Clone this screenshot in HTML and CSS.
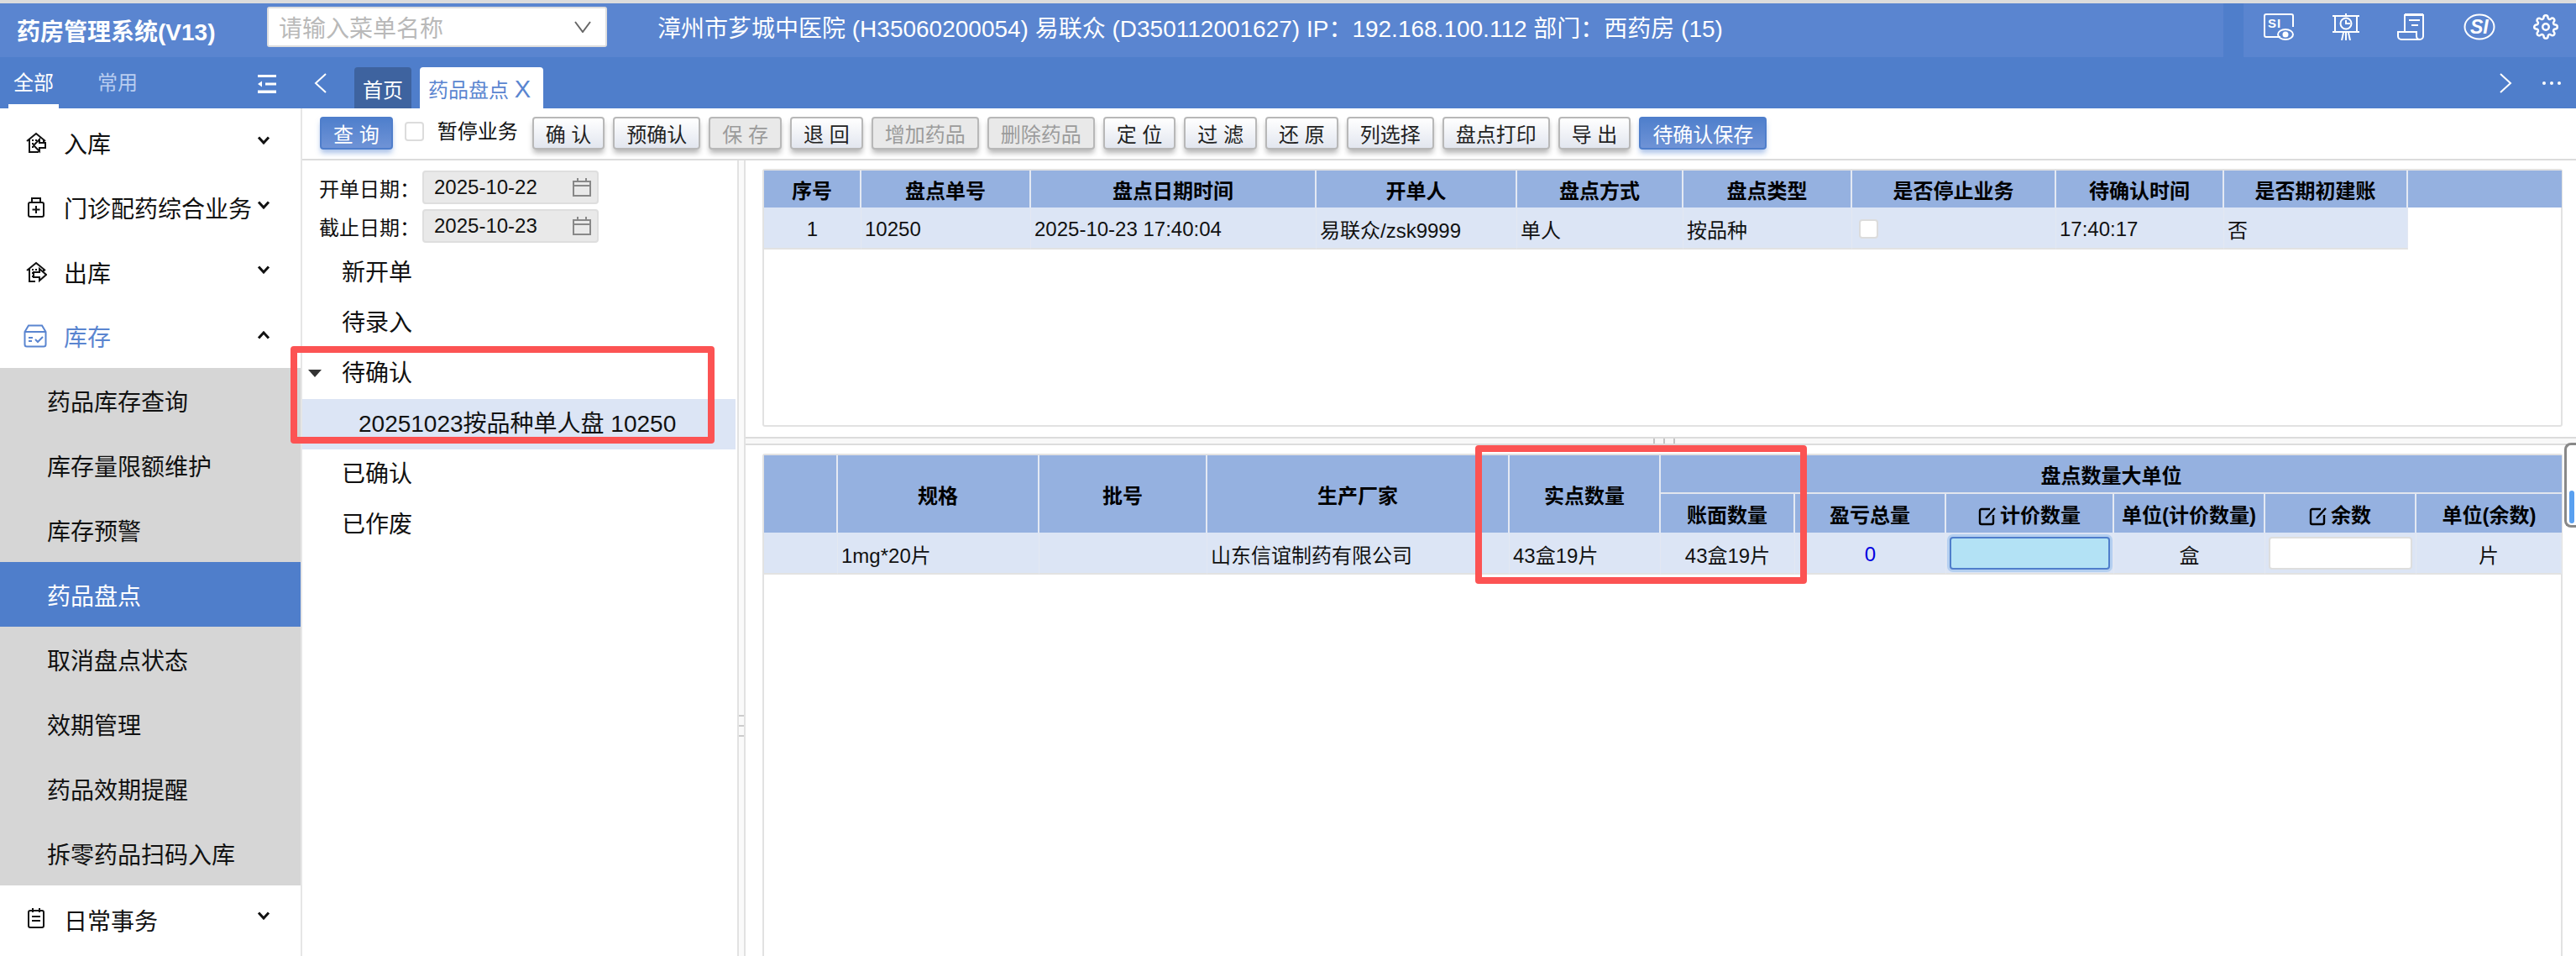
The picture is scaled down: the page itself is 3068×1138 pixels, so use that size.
FILE: index.html
```html
<!DOCTYPE html>
<html lang="zh-CN">
<head>
<meta charset="utf-8">
<title>药房管理系统</title>
<link rel="stylesheet" href="styles.css">
</head>
<body>
<div class="app">
  <header class="header">
    <div class="title">药房管理系统(V13)</div>
    <div class="search">
      <span class="search-text">请输入菜单名称</span>
      <svg class="search-caret" viewBox="0 0 20 14"><path d="M1 1 L10 13 L19 1"/></svg>
    </div>
    <div class="info">漳州市芗城中医院 (H35060200054) 易联众 (D350112001627) IP：192.168.100.112 部门：西药房 (15)</div>
    <div class="stripe"></div>
    <div class="tools">
      <svg class="ico w36" viewBox="0 0 36 32"><path d="M20 28H3a2 2 0 0 1-2-2V3a2 2 0 0 1 2-2h30a2 2 0 0 1 2 2v13"/><text x="5" y="17" class="ico-text">SI</text><ellipse cx="26" cy="25" rx="9" ry="6"/><circle cx="26" cy="25" r="2.5" class="solid"/></svg>
      <svg class="ico w32" viewBox="0 0 32 32"><path d="M0 3H32M0 22H32M3 3V22M29 3V22M16 0V3M13 23L11 32M16 23V32M19 23L21 32"/><circle cx="16" cy="12" r="6.5"/><path d="M16 8V12H21"/></svg>
      <svg class="ico w33" viewBox="0 0 33 32"><path d="M9 22V2H31V27a4 4 0 0 1-4 4H5a4 4 0 0 1-4-4V22H23V27a4 4 0 0 0 4 4M9 1H31" /><path d="M14 8H27M17 14H25"/></svg>
      <svg class="ico w38" viewBox="0 0 38 32"><ellipse cx="19" cy="16" rx="17.5" ry="14.5"/><text x="8" y="24" class="ico-si">SI</text></svg>
      <svg class="ico w29" viewBox="0 0 24 24"><path d="M12 15a3 3 0 1 0 0-6 3 3 0 0 0 0 6z"/><path d="M19.4 15a1.65 1.65 0 0 0 .33 1.82l.06.06a2 2 0 0 1 0 2.83 2 2 0 0 1-2.83 0l-.06-.06a1.65 1.65 0 0 0-1.82-.33 1.65 1.65 0 0 0-1 1.51V21a2 2 0 0 1-2 2 2 2 0 0 1-2-2v-.09A1.65 1.65 0 0 0 9 19.4a1.65 1.65 0 0 0-1.82.33l-.06.06a2 2 0 0 1-2.83 0 2 2 0 0 1 0-2.83l.06-.06a1.65 1.65 0 0 0 .33-1.82 1.65 1.65 0 0 0-1.51-1H3a2 2 0 0 1-2-2 2 2 0 0 1 2-2h.09A1.65 1.65 0 0 0 4.6 9a1.65 1.65 0 0 0-.33-1.82l-.06-.06a2 2 0 0 1 0-2.83 2 2 0 0 1 2.83 0l.06.06a1.65 1.65 0 0 0 1.82.33H9a1.65 1.65 0 0 0 1-1.51V3a2 2 0 0 1 2-2 2 2 0 0 1 2 2v.09a1.65 1.65 0 0 0 1 1.51 1.65 1.65 0 0 0 1.82-.33l.06-.06a2 2 0 0 1 2.83 0 2 2 0 0 1 0 2.83l-.06.06a1.65 1.65 0 0 0-.33 1.82V9a1.65 1.65 0 0 0 1.51 1H21a2 2 0 0 1 2 2 2 2 0 0 1-2 2h-.09a1.65 1.65 0 0 0-1.51 1z"/></svg>
    </div>
  </header>

  <nav class="tabbar">
    <div class="side-tabs">
      <span class="side-tab on">全部</span>
      <span class="side-tab">常用</span>
      <svg class="collapse" viewBox="0 0 22 22"><path d="M0 0H22V3H0ZM0 18.5H22V22H0ZM9 9.5H22V12.5H9ZM0 11L5 7.5V14.5Z"/></svg>
    </div>
    <svg class="nav-arrow prev" viewBox="0 0 16 24"><path d="M14 1L2 12L14 23"/></svg>
    <div class="tab home">首页</div>
    <div class="tab active">药品盘点 <span class="tab-x">X</span></div>
    <svg class="nav-arrow next" viewBox="0 0 16 24"><path d="M2 1L14 12L2 23"/></svg>
    <span class="dots"><i></i><i></i><i></i></span>
  </nav>

  <div class="body">
    <aside class="sidebar">
      <div class="menu">
        <svg class="m-ico" viewBox="0 0 26 26"><path d="M2 11L13 2L24 11M5 9V24H16M22 9V12"/><path class="fillw" d="M24 13H17V9L10 16L17 23V19H24Z"/><path class="dotp" d="M8 9h2v2H8zM12 9h2v2h-2zM8 13h2v2H8zM8 17h2v2H8zM12 13h1v2h-1z"/></svg>
        <span>入库</span>
        <svg class="chev" viewBox="0 0 16 10"><path d="M2 1.5L8 8L14 1.5"/></svg>
      </div>
      <div class="menu">
        <svg class="m-ico" viewBox="0 0 26 26"><path d="M8 7V2H18V7"/><rect x="4" y="7" width="18" height="17" rx="2"/><path d="M13 11V20M8.5 15.5H17.5"/></svg>
        <span>门诊配药综合业务</span>
        <svg class="chev" viewBox="0 0 16 10"><path d="M2 1.5L8 8L14 1.5"/></svg>
      </div>
      <div class="menu">
        <svg class="m-ico" viewBox="0 0 26 26"><path d="M2 11L13 2L24 11M5 9V24H12M22 9V12"/><path class="fillw" d="M10 13H17V9L25 16L17 23V19H10Z"/><path class="dotp" d="M8 9h2v2H8zM12 9h2v2h-2zM8 13h2v2H8zM8 17h2v2H8z"/></svg>
        <span>出库</span>
        <svg class="chev" viewBox="0 0 16 10"><path d="M2 1.5L8 8L14 1.5"/></svg>
      </div>
      <div class="menu open">
        <svg class="m-ico big" viewBox="0 0 28 28"><path d="M1.5 9L6 1.5H22L26.5 9V24a2.5 2.5 0 0 1-2.5 2.5H4A2.5 2.5 0 0 1 1.5 24ZM1.5 9H26.5M6 16H11M6 20H10M14 18L17 21L23 15"/></svg>
        <span>库存</span>
        <svg class="chev" viewBox="0 0 16 10"><path d="M2 8.5L8 2L14 8.5"/></svg>
      </div>
      <ul class="submenu">
        <li>药品库存查询</li>
        <li>库存量限额维护</li>
        <li>库存预警</li>
        <li class="on">药品盘点</li>
        <li>取消盘点状态</li>
        <li>效期管理</li>
        <li>药品效期提醒</li>
        <li>拆零药品扫码入库</li>
      </ul>
      <div class="menu last">
        <svg class="m-ico" viewBox="0 0 26 26"><rect x="4" y="4" width="18" height="20" rx="2"/><path d="M9 1V6M17 1V6M8 11H18M8 16H18"/></svg>
        <span>日常事务</span>
        <svg class="chev" viewBox="0 0 16 10"><path d="M2 1.5L8 8L14 1.5"/></svg>
      </div>
    </aside>

    <main class="main">
      <div class="toolbar">
        <button class="btn primary">查 询</button>
        <span class="check"></span>
        <span class="check-label">暂停业务</span>
        <button class="btn">确 认</button>
        <button class="btn">预确认</button>
        <button class="btn off">保 存</button>
        <button class="btn">退 回</button>
        <button class="btn off">增加药品</button>
        <button class="btn off">删除药品</button>
        <button class="btn">定 位</button>
        <button class="btn">过 滤</button>
        <button class="btn">还 原</button>
        <button class="btn">列选择</button>
        <button class="btn">盘点打印</button>
        <button class="btn">导 出</button>
        <button class="btn primary">待确认保存</button>
      </div>

      <div class="work">
        <section class="left">
          <div class="date-row">
            <label>开单日期：</label>
            <div class="date"><span>2025-10-22</span><svg class="cal" viewBox="0 0 22 22"><path d="M1 4H21V21H1ZM1 9H21M6 0V4M16 0V4"/></svg></div>
          </div>
          <div class="date-row">
            <label>截止日期：</label>
            <div class="date"><span>2025-10-23</span><svg class="cal" viewBox="0 0 22 22"><path d="M1 4H21V21H1ZM1 9H21M6 0V4M16 0V4"/></svg></div>
          </div>
          <ul class="tree">
            <li>新开单</li>
            <li>待录入</li>
            <li class="expanded">待确认</li>
            <li class="leaf">20251023按品种单人盘 10250</li>
            <li>已确认</li>
            <li>已作废</li>
          </ul>
        </section>

        <div class="vsplit"><span class="vgrip"></span></div>

        <section class="right">
          <div class="pane-top">
            <div class="grid-box">
              <table class="grid">
                <colgroup>
                  <col class="w116"><col class="w202"><col class="w340"><col class="w239"><col class="w198"><col class="w201"><col class="w243"><col class="w200"><col class="w219"><col class="w183">
                </colgroup>
                <thead>
                  <tr class="head-44">
                    <th>序号</th><th>盘点单号</th><th>盘点日期时间</th><th>开单人</th><th>盘点方式</th><th>盘点类型</th><th>是否停止业务</th><th>待确认时间</th><th>是否期初建账</th><th></th>
                  </tr>
                </thead>
                <tbody>
                  <tr>
                    <td class="center">1</td><td>10250</td><td>2025-10-23 17:40:04</td><td>易联众/zsk9999</td><td>单人</td><td>按品种</td><td class="box-cell"><span class="check small"></span></td><td>17:40:17</td><td>否</td><td class="blank"></td>
                  </tr>
                </tbody>
              </table>
            </div>
          </div>

          <div class="hsplit"><span class="hgrip"></span></div>

          <div class="pane-bottom">
            <div class="grid-box fill">
              <table class="grid">
                <colgroup>
                  <col class="w88"><col class="w240"><col class="w200"><col class="w360"><col class="w180"><col class="w160"><col class="w180"><col class="w200"><col class="w180"><col class="w180"><col class="w173">
                </colgroup>
                <thead>
                  <tr class="head-46">
                    <th rowspan="2"></th><th rowspan="2">规格</th><th rowspan="2">批号</th><th rowspan="2">生产厂家</th><th rowspan="2">实点数量</th>
                    <th colspan="6" class="group">盘点数量大单位</th>
                  </tr>
                  <tr class="head-46">
                    <th>账面数量</th><th>盈亏总量</th>
                    <th><svg class="edit" viewBox="0 0 22 22"><path d="M14 2H4a2 2 0 0 0-2 2V18a2 2 0 0 0 2 2H16a2 2 0 0 0 2-2V9M9 13L20 1"/></svg>计价数量</th>
                    <th>单位(计价数量)</th>
                    <th><svg class="edit" viewBox="0 0 22 22"><path d="M14 2H4a2 2 0 0 0-2 2V18a2 2 0 0 0 2 2H16a2 2 0 0 0 2-2V9M9 13L20 1"/></svg>余数</th>
                    <th>单位(余数)</th>
                  </tr>
                </thead>
                <tbody>
                  <tr>
                    <td></td><td>1mg*20片</td><td></td><td>山东信谊制药有限公司</td><td>43盒19片</td>
                    <td class="center">43盒19片</td><td class="center num">0</td>
                    <td class="center tight"><span class="field focus"></span></td>
                    <td class="center">盒</td>
                    <td class="center tight"><span class="field"></span></td>
                    <td class="center">片</td>
                  </tr>
                </tbody>
              </table>
            </div>
          </div>
        </section>
      </div>
    </main>
  </div>

  <div class="mark mark-tree"></div>
  <div class="mark mark-qty"></div>
  <div class="scroll-thumb"><span></span></div>
</div>
</body>
</html>
```
FILE: styles.css
```css
* { box-sizing: border-box; }
html, body { margin: 0; padding: 0; background: #fff; }
body { font-family: "Liberation Sans", "Noto Sans CJK SC", sans-serif; font-size: 24px; color: #111; }
ul { list-style: none; margin: 0; padding: 0; }

.app { position: relative; width: 3068px; height: 1138px; overflow: hidden; border-top: 4px solid #dcdcdc; display: flex; flex-direction: column; }

/* header */
.header { flex: none; height: 64px; background: #5a85d0; color: #fff; display: flex; align-items: center; }
.title { width: 318px; padding-left: 20px; font-size: 28px; font-weight: 700; white-space: nowrap; }
.search { width: 405px; height: 48px; margin-top: -8px; background: #fff; border: 2px solid #dedede; border-radius: 3px; display: flex; align-items: center; justify-content: space-between; padding: 0 17px 0 12px; }
.search-text { color: #b9b9b9; font-size: 28px; }
.search-caret { width: 20px; height: 14px; fill: none; stroke: #666; stroke-width: 2; }
.info { margin-left: 60px; font-size: 28px; white-space: nowrap; flex: 1; margin-top: -8px; }
.stripe { width: 24px; height: 64px; background: #4f7ecb; flex: none; }
.tools { width: 396px; flex: none; display: flex; align-items: center; justify-content: space-between; padding: 0 21px 0 24px; margin-top: -8px; }
.ico { height: 32px; fill: none; stroke: #fff; stroke-width: 2; }
.w36 { width: 36px; } .w32 { width: 32px; } .w33 { width: 33px; } .w38 { width: 38px; } .w29 { width: 30px; }
.ico-text { font: 700 15px "Liberation Sans", sans-serif; fill: #fff; stroke: none; letter-spacing: 1px; }
.ico-si { font: italic 700 23px "Liberation Sans", sans-serif; fill: #fff; stroke: none; }
.solid { fill: #fff; }

/* tab bar */
.tabbar { flex: none; height: 61px; background: #4f7ecb; display: flex; align-items: flex-end; }
.side-tabs { width: 360px; height: 61px; display: flex; position: relative; padding-left: 10px; }
.side-tab { width: 60px; height: 61px; margin-right: 40px; padding-top: 11px; text-align: center; color: #b9cdf0; font-size: 24px; }
.side-tab.on { color: #fff; box-shadow: inset 0 -5px 0 #fff; }
.collapse { position: absolute; left: 307px; top: 21px; width: 22px; height: 22px; fill: #fff; }
.nav-arrow { width: 16px; height: 24px; fill: none; stroke: #fff; stroke-width: 2; align-self: center; }
.prev { margin-left: 14px; margin-right: 32px; }
.tab { height: 49px; padding: 12px 10px 0; font-size: 24px; line-height: 32px; border-radius: 4px 4px 0 0; white-space: nowrap; }
.home { background: #3e639f; color: #fff; width: 68px; }
.active { background: #fff; color: #5a85d0; width: 147px; margin-left: 10px; }
.tab-x { font-size: 29px; line-height: 28px; }
.next { margin-left: auto; margin-right: 36px; }
.dots { align-self: center; display: flex; gap: 5px; margin-right: 18px; }
.dots i { width: 4px; height: 4px; border-radius: 50%; background: #fff; }

/* body */
.body { flex: 1; display: flex; min-height: 0; }
.sidebar { width: 360px; flex: none; border-right: 2px solid #e6e6e6; background: #fff; padding-top: 2px; }
.menu { height: 77px; display: flex; align-items: center; position: relative; font-size: 28px; padding-left: 76px; }
.menu.last { padding-top: 4px; }
.m-ico { position: absolute; left: 30px; top: 26px; width: 26px; height: 26px; fill: none; stroke: #111; stroke-width: 2; }
.m-ico.big { left: 28px; width: 28px; height: 28px; top: 24px; stroke: #5a85d0; }
.fillw { fill: #fff; }
.dotp { fill: #111; stroke: none; }
.chev { position: absolute; left: 306px; top: 31px; width: 16px; height: 10px; fill: none; stroke: #111; stroke-width: 3; }
.open { color: #5a85d0; height: 76px; }
.open .chev { top: 32px; }
.submenu li { height: 77px; line-height: 84px; padding-left: 56px; background: #d6d6d6; font-size: 28px; }
.submenu li.on { background: #4f7ecb; color: #fff; }

/* main */
.main { flex: 1; min-width: 0; display: flex; flex-direction: column; }
.toolbar { flex: none; height: 62px; border-bottom: 2px solid #dcdcdc; display: flex; align-items: flex-start; gap: 10px; padding: 10px 0 0 21px; }
.btn { height: 39px; padding: 0 14px; border: 2px solid #b8b8b8; border-radius: 4px; background: linear-gradient(#fff, #e2e6ef); font: 24px "Liberation Sans", "Noto Sans CJK SC", sans-serif; color: #222; box-shadow: 0 5px 6px -1px rgba(0,0,0,.3); white-space: nowrap; }
.btn.primary { background: linear-gradient(#4f7fcc, #6f93d6); border-color: #4f7ecb; color: #fff; box-shadow: 0 5px 6px -1px rgba(80,130,210,.5); }
.btn.off { background: #e9e9e9; color: #9b9b9b; }
.check { width: 23px; height: 23px; border: 2px solid #dcdcdc; border-radius: 4px; background: #fff; flex: none; display: inline-block; }
.toolbar .check { margin: 6px 0 0 4px; }
.check-label { margin: 1px 7px 0 6px; font-size: 24px; line-height: 34px; white-space: nowrap; }

.work { flex: 1; display: flex; min-height: 0; }
.left { width: 518px; flex: none; padding-top: 12px; }
.date-row { display: flex; align-items: center; height: 40px; margin-bottom: 6px; padding-left: 20px; }
.date-row label { width: 123px; font-size: 24px; white-space: nowrap; }
.date { width: 210px; height: 40px; background: #e9e9e9; border: 2px solid #dedede; border-radius: 4px; display: flex; align-items: center; justify-content: space-between; padding: 0 7px 0 12px; }
.cal { width: 22px; height: 22px; fill: none; stroke: #888; stroke-width: 2; }
.tree { margin-top: 1px; }
.tree li { height: 60px; line-height: 60px; padding-left: 47px; font-size: 28px; position: relative; }
.tree .expanded::before { content: ""; position: absolute; left: 7px; top: 25px; border: 8px solid transparent; border-top: 9px solid #333; border-bottom: 0; }
.tree .leaf { padding-left: 67px; background: #dce5f5; margin-right: 2px; }

.vsplit { width: 10px; flex: none; background: #fafafa; border-left: 2px solid #e2e2e2; border-right: 2px solid #e2e2e2; position: relative; }
.vgrip { position: absolute; left: 0; right: 0; top: 660px; height: 26px; border-top: 2px solid #ccc; border-bottom: 2px solid #ccc; }
.vgrip::after { content: ""; position: absolute; left: 0; right: 0; top: 10px; height: 2px; background: #ccc; }

.right { flex: 1; min-width: 0; display: flex; flex-direction: column; }
.pane-top { height: 329px; flex: none; padding: 10px 16px 12px 20px; }
.hsplit { height: 10px; flex: none; background: #f8f8f8; border-top: 2px solid #dcdcdc; border-bottom: 2px solid #dcdcdc; position: relative; }
.hgrip { position: absolute; left: 1081px; top: 0; width: 26px; height: 6px; border-left: 2px solid #c4c4c4; border-right: 2px solid #c4c4c4; }
.hgrip::after { content: ""; position: absolute; left: 10px; top: 0; width: 2px; height: 6px; background: #c4c4c4; }
.pane-bottom { flex: 1; min-height: 0; padding: 10px 16px 0 20px; }
.grid-box { height: 100%; border: 2px solid #e2e2e2; border-radius: 3px; }
.grid-box.fill { height: 700px; }

.grid { width: 2141px; table-layout: fixed; border-collapse: separate; border-spacing: 0; font-size: 24px; }
.w88 { width: 88px; } .w116 { width: 116px; } .w160 { width: 160px; } .w173 { width: 173px; }
.w180 { width: 180px; } .w183 { width: 183px; } .w198 { width: 198px; } .w200 { width: 200px; }
.w201 { width: 201px; } .w202 { width: 202px; } .w219 { width: 219px; } .w239 { width: 239px; }
.w240 { width: 240px; } .w243 { width: 243px; } .w340 { width: 340px; } .w360 { width: 360px; }
.grid th { background: #95b1e0; font-weight: 700; color: #000; text-align: center; border-right: 2px solid #e4e9f3; white-space: nowrap; padding: 0; }
.grid th:last-child { border-right: 0; }
.head-44 th { height: 44px; }
.head-46 th { height: 46px; }
.grid .group { border-bottom: 2px solid #e2e6ee; }
.grid td { height: 50px; background: #dce5f5; border-right: 1px solid #e3e8f2; border-bottom: 2px solid #e2e2e2; padding: 3px 0 0 4px; white-space: nowrap; overflow: hidden; }
.grid td.blank { background: transparent; border: 0; }
.grid td.center { text-align: center; padding: 3px 0 0; }
.grid td.num { color: #0000e0; }
.grid td.box-cell { padding: 0 0 0 8px; vertical-align: middle; }
.grid td.tight { padding: 0 4px; overflow: visible; }
.check.small { vertical-align: middle; }
.field { display: block; height: 39px; background: #fff; border: 2px solid #dedede; border-radius: 4px; }
.field.focus { background: #b3e2f5; border-color: #4f7ecb; box-shadow: 0 0 0 3px #b4cff0; }
.edit { width: 22px; height: 22px; margin-right: 4px; fill: none; stroke: #000; stroke-width: 2.4; vertical-align: -4px; }

/* annotations and overlays */
.mark { position: absolute; border: 8px solid #fc5353; border-radius: 4px; pointer-events: none; }
.mark-tree { left: 346px; top: 408px; width: 505px; height: 116px; }
.mark-qty { left: 1757px; top: 526px; width: 395px; height: 165px; }
.scroll-thumb { position: absolute; left: 3054px; top: 523px; width: 14px; height: 101px; border: 3px solid #888; border-right: 0; border-radius: 8px 0 0 8px; background: #fff; }
.scroll-thumb span { display: block; margin: 54px 0 0 3px; width: 6px; height: 39px; background: #5aa0f0; border-radius: 3px; }
```
